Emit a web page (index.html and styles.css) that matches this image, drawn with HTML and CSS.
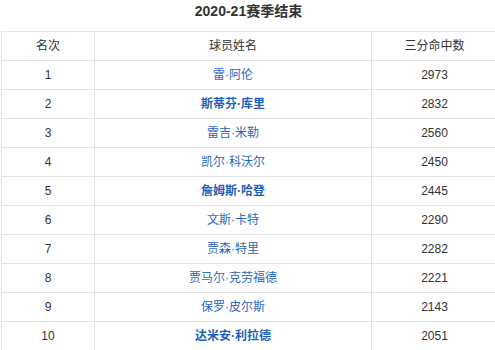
FILE: index.html
```html
<!DOCTYPE html>
<html lang="zh-CN">
<head>
<meta charset="utf-8">
<link rel="stylesheet" href="styles.css">
</head>
<body>
<div class="wrap">
  <div class="title">2020-21赛季结束</div>
  <table class="rank">
    <colgroup>
      <col class="c1"><col class="c2"><col class="c3">
    </colgroup>
    <thead>
      <tr><th>名次</th><th>球员姓名</th><th>三分命中数</th></tr>
    </thead>
    <tbody>
      <tr><td>1</td><td class="name">雷·阿伦</td><td>2973</td></tr>
      <tr><td>2</td><td class="name bold">斯蒂芬·库里</td><td>2832</td></tr>
      <tr><td>3</td><td class="name">雷吉·米勒</td><td>2560</td></tr>
      <tr><td>4</td><td class="name">凯尔·科沃尔</td><td>2450</td></tr>
      <tr><td>5</td><td class="name bold">詹姆斯·哈登</td><td>2445</td></tr>
      <tr><td>6</td><td class="name">文斯·卡特</td><td>2290</td></tr>
      <tr><td>7</td><td class="name">贾森·特里</td><td>2282</td></tr>
      <tr><td>8</td><td class="name">贾马尔·克劳福德</td><td>2221</td></tr>
      <tr><td>9</td><td class="name">保罗·皮尔斯</td><td>2143</td></tr>
      <tr><td>10</td><td class="name bold">达米安·利拉德</td><td>2051</td></tr>
    </tbody>
  </table>
</div>
</body>
</html>
```
FILE: styles.css
```css
html, body {
  margin: 0;
  padding: 0;
  overflow: hidden;
  background: #fff;
}
body {
  font-family: "Liberation Sans", "Noto Sans CJK SC", sans-serif;
  color: #333;
}
.wrap {
  width: 497px;
}
.title {
  font-size: 14px;
  font-weight: bold;
  line-height: 23px;
  text-align: center;
  margin-bottom: 8px;
  color: #333;
}
.rank {
  margin-left: 1px;
  width: 496px;
  border-collapse: collapse;
  table-layout: fixed;
  font-size: 12px;
}
.c1 { width: 93px; }
.c2 { width: 277px; }
.c3 { width: 126px; }
.rank th,
.rank td {
  border: 1px solid #e3e3e3;
  height: 28px;
  padding: 0;
  line-height: 28px;
  text-align: center;
  font-weight: normal;
  color: #333;
}
.rank td.name {
  color: #2a67c0;
}
.rank td.bold {
  font-weight: bold;
  color: #1f5fb8;
}
```
